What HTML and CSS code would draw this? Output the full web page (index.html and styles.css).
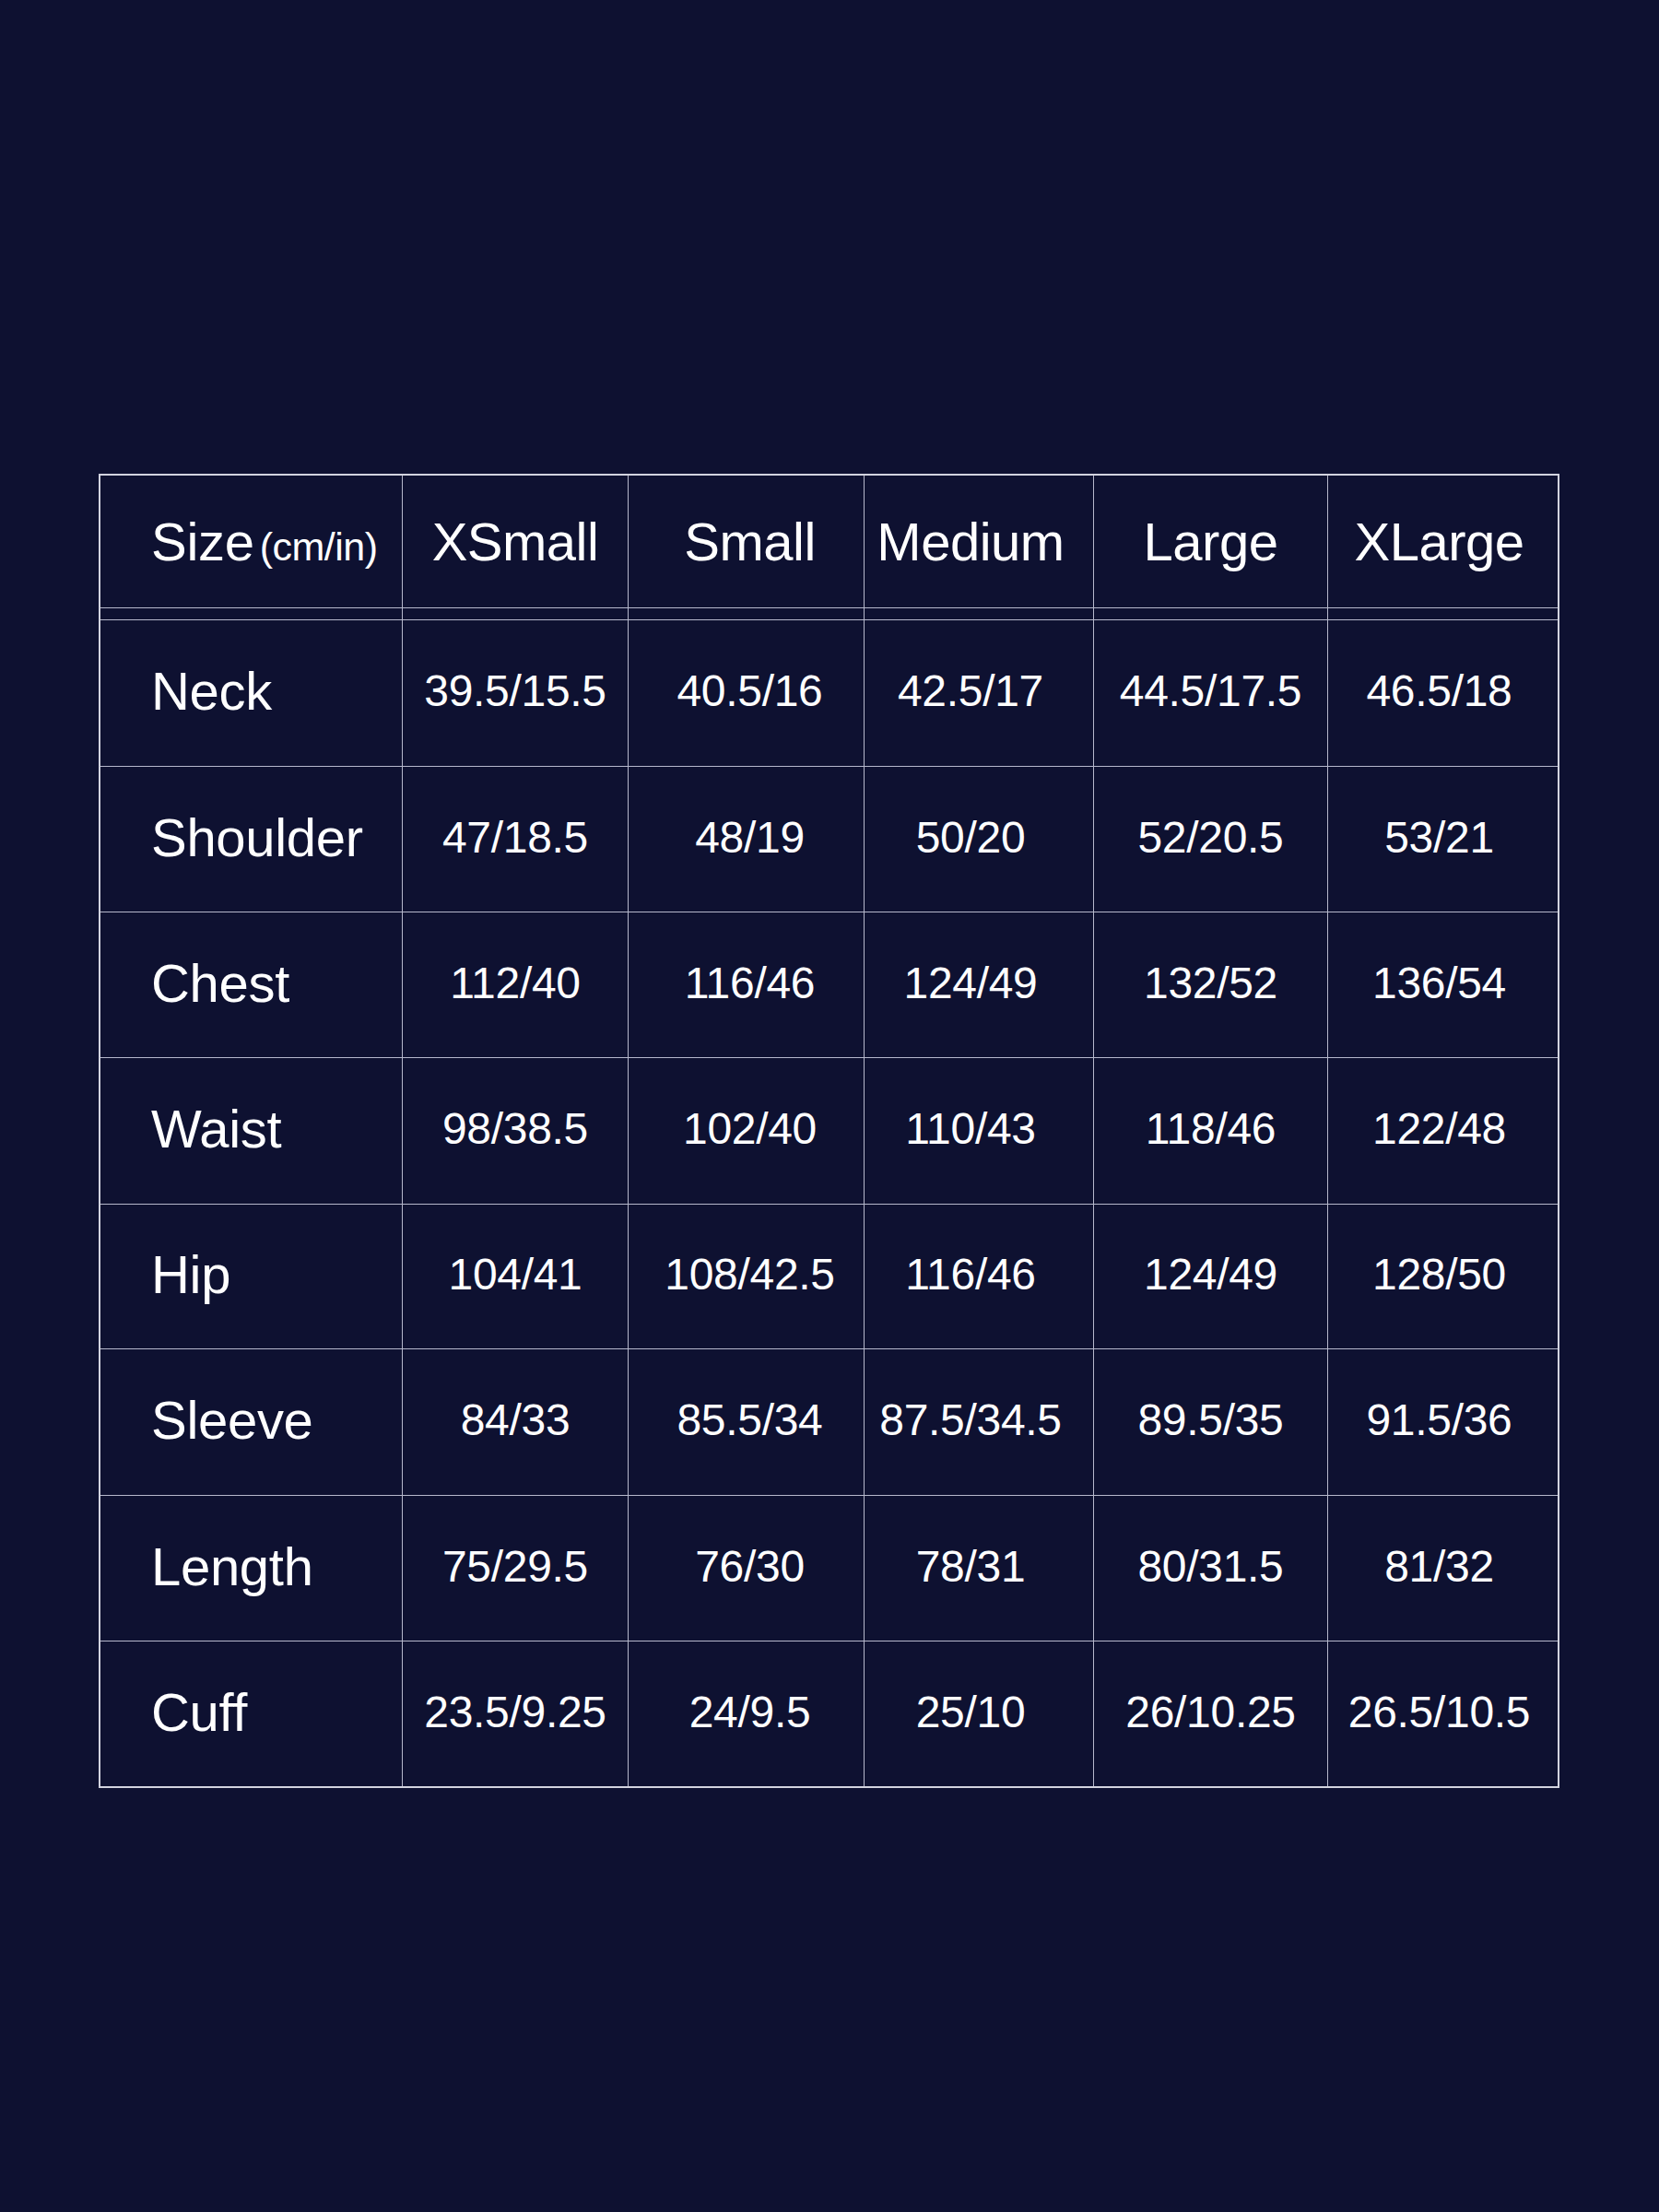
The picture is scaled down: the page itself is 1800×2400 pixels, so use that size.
FILE: index.html
```html
<!DOCTYPE html>
<html lang="en">
<head>
<meta charset="utf-8">
<title>Size Chart</title>
<link rel="stylesheet" href="styles.css">
</head>
<body>
<main class="page">
  <div class="chart">
    <div class="cell head label">Size<span class="unit">(cm/in)</span></div>
    <div class="cell head">XSmall</div>
    <div class="cell head">Small</div>
    <div class="cell head">Medium</div>
    <div class="cell head">Large</div>
    <div class="cell head">XLarge</div>

    <div class="cell spacer"></div><div class="cell spacer"></div><div class="cell spacer"></div>
    <div class="cell spacer"></div><div class="cell spacer"></div><div class="cell spacer"></div>

    <div class="cell label">Neck</div>
    <div class="cell val">39.5/15.5</div><div class="cell val">40.5/16</div><div class="cell val">42.5/17</div><div class="cell val">44.5/17.5</div><div class="cell val">46.5/18</div>

    <div class="cell label">Shoulder</div>
    <div class="cell val">47/18.5</div><div class="cell val">48/19</div><div class="cell val">50/20</div><div class="cell val">52/20.5</div><div class="cell val">53/21</div>

    <div class="cell label">Chest</div>
    <div class="cell val">112/40</div><div class="cell val">116/46</div><div class="cell val">124/49</div><div class="cell val">132/52</div><div class="cell val">136/54</div>

    <div class="cell label">Waist</div>
    <div class="cell val">98/38.5</div><div class="cell val">102/40</div><div class="cell val">110/43</div><div class="cell val">118/46</div><div class="cell val">122/48</div>

    <div class="cell label">Hip</div>
    <div class="cell val">104/41</div><div class="cell val">108/42.5</div><div class="cell val">116/46</div><div class="cell val">124/49</div><div class="cell val">128/50</div>

    <div class="cell label">Sleeve</div>
    <div class="cell val">84/33</div><div class="cell val">85.5/34</div><div class="cell val">87.5/34.5</div><div class="cell val">89.5/35</div><div class="cell val">91.5/36</div>

    <div class="cell label">Length</div>
    <div class="cell val">75/29.5</div><div class="cell val">76/30</div><div class="cell val">78/31</div><div class="cell val">80/31.5</div><div class="cell val">81/32</div>

    <div class="cell label">Cuff</div>
    <div class="cell val">23.5/9.25</div><div class="cell val">24/9.5</div><div class="cell val">25/10</div><div class="cell val">26/10.25</div><div class="cell val">26.5/10.5</div>
  </div>
</main>
</body>
</html>
```
FILE: styles.css
```css
html, body {
  margin: 0;
  padding: 0;
  background: #0e1131;
}
body {
  width: 1800px;
  min-height: 2400px;
  font-family: "Liberation Sans", Arial, sans-serif;
  color: #ffffff;
}
.page {
  padding: 514px 0 0 107px;
}
.chart {
  width: 1581px;
  display: grid;
  grid-template-columns: 327px 244px 255px 248px 253px 249px;
  grid-template-rows: 143px 12px 158px 157px 157px 158px 156px 158px 157px 157px;
  gap: 1px;
  background: #b6b8cc;
  border: 2px solid #d2d3df;
}
.cell {
  background: #0e1131;
  display: flex;
  align-items: center;
  justify-content: center;
}
/* slight per-column optical offsets */
.chart > .cell:nth-child(6n+3) { padding-left: 8px; }
.chart > .cell:nth-child(6n+4) { padding-right: 18px; }
.chart > .cell:nth-child(6n+6) { padding-right: 8px; }

.head {
  font-size: 58px;
  letter-spacing: -0.5px;
}
.label {
  justify-content: flex-start;
  padding-left: 55px;
  padding-bottom: 5px;
  font-size: 58px;
  letter-spacing: -0.3px;
}
.head.label {
  padding-bottom: 0;
  align-items: baseline;
  align-content: center;
  flex-wrap: wrap;
}
.unit {
  font-size: 43px;
  margin-left: 6px;
  letter-spacing: -0.5px;
}
.val {
  font-size: 48px;
  letter-spacing: -0.3px;
  padding-bottom: 5px;
}
.spacer {
  font-size: 0;
}
```
